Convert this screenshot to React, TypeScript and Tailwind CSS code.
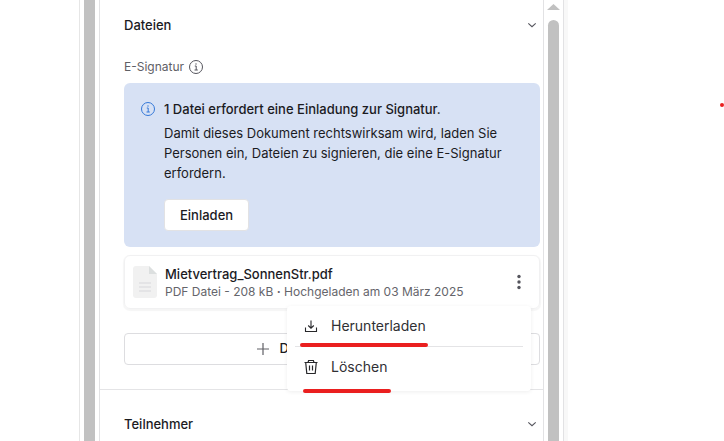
import type { ReactNode } from "react";

function InfoIcon({ className }: { className: string }) {
    return (
        <svg className={className} width="16" height="16" viewBox="0 0 16 16" fill="none" stroke="currentColor" aria-hidden="true">
            <circle cx="8" cy="8" r="6.5" />
            <path d="M6.8 7H8.2V11M6.5 11H9.8" />
            <circle cx="8" cy="5" r="0.7" fill="currentColor" stroke="none" />
        </svg>
    )
}

function ChevronIcon() {
    return (
        <svg width="16" height="16" viewBox="0 0 16 16" fill="none" aria-hidden="true">
            <path d="M4.3 6.3L8 9.7L11.7 6.3" stroke="#55555d" strokeWidth="1.1" />
        </svg>
    )
}

function FileIcon() {
    return (
        <svg className="shrink-0" width="24" height="32" viewBox="0 0 24 32" aria-hidden="true">
            <path d="M3 0H16L24 8V29Q24 32 21 32H3Q0 32 0 29V3Q0 0 3 0Z" fill="#f1f1f1" />
            <path d="M16 0L24 8H16Z" fill="#dcdfdf" />
            <path d="M6 17H18M6 21H18M6 25H18" stroke="#dfe0e2" strokeWidth="1.6" />
        </svg>
    )
}

function DownloadIcon() {
    return (
        <svg width="16" height="16" viewBox="0 0 16 16" fill="none" stroke="#27272a" strokeWidth="1.1" aria-hidden="true">
            <path d="M8 2.5V10M5.2 7.5L8 10.2L10.8 7.5M2.5 9.5V13.5H13.5V9.5" />
        </svg>
    )
}

function TrashIcon() {
    return (
        <svg width="16" height="16" viewBox="0 0 16 16" fill="none" stroke="#27272a" strokeWidth="1.2" aria-hidden="true">
            <path d="M1.5 3.5H14.5M5 3.5L5.6 1.5H10.4L11 3.5M2.7 3.5L3.8 14.5H12.2L13.3 3.5M6.5 6.5V11.5M9.5 6.5V11.5" />
        </svg>
    )
}

function SectionHeader({ title }: { title: string }) {
    return (
        <button type="button" className="flex w-full items-center justify-between text-[13px] leading-5 font-medium text-[#1b1b1f]">
            {title}
            <ChevronIcon />
        </button>
    )
}

function MenuItem({ icon, label }: { icon: ReactNode, label: string }) {
    return (
        <button type="button" role="menuitem" className="flex h-10 w-full items-center gap-3 px-2 text-sm text-[#303034]">
            {icon}
            {label}
        </button>
    )
}

function FileMenu() {
    return (
        <div role="menu" className="absolute top-[50px] right-2 z-10 w-[244px] rounded-sm bg-white px-2 pb-1 shadow-[0_1px_4px_rgba(0,0,0,0.07)]">
            <MenuItem icon={<DownloadIcon />} label="Herunterladen" />
            <div className="h-px bg-[#e4e4e6]"></div>
            <MenuItem icon={<TrashIcon />} label="Löschen" />
            <span className="absolute top-[37px] left-[13px] h-1 w-32 rounded-full bg-[#ea1f1f]"></span>
            <span className="absolute -bottom-0.5 left-4 h-1 w-[88px] rounded-full bg-[#ea1f1f]"></span>
        </div>
    )
}

function SignatureNotice() {
    return (
        <div className="flex gap-2 rounded-md bg-[#d7e1f4] p-4 text-[13px] leading-5 text-[#1b1b1f]">
            <InfoIcon className="mt-0.5 shrink-0 text-[#3478d8]" />
            <div>
                <p className="font-medium">1 Datei erfordert eine Einladung zur Signatur.</p>
                <p className="mt-1 max-w-[344px]">
                    Damit dieses Dokument rechtswirksam wird, laden Sie Personen ein, Dateien zu signieren, die eine E-Signatur erfordern.
                </p>
                <button type="button" className="mt-4 block h-8 rounded-sm border border-[#e2e2e4] bg-white px-[15px] font-medium">
                    Einladen
                </button>
            </div>
        </div>
    )
}

function FileCard() {
    return (
        <div className="relative mt-2 flex h-[54px] items-center rounded-md border border-[#f1f1f2] px-2 shadow-[0_1px_1px_1px_rgba(0,0,0,0.04)]">
            <FileIcon />
            <div className="ml-2 flex-1 pt-0.5 whitespace-nowrap">
                <p className="text-[13px] leading-[18px] font-medium text-[#1b1b1f]">Mietvertrag_SonnenStr.pdf</p>
                <p className="text-xs leading-[18px] text-[#65656b]">
                    PDF Datei - 208 kB <span className="font-bold">·</span> Hochgeladen am 03 März 2025
                </p>
            </div>
            <button type="button" aria-label="Optionen" className="mr-1">
                <svg width="16" height="16" viewBox="0 0 16 16" fill="#55555d" aria-hidden="true">
                    <circle cx="8" cy="2.5" r="1.7" />
                    <circle cx="8" cy="8" r="1.7" />
                    <circle cx="8" cy="13.5" r="1.7" />
                </svg>
            </button>
            <FileMenu />
        </div>
    )
}

export default function App() {
    return (
        <div className="relative flex h-screen overflow-hidden bg-white font-['Inter','Liberation_Sans',sans-serif]">
            <div className="w-20 shrink-0 border-r border-[#e6e6e6]"></div>
            <div className="flex w-5 shrink-0 border-r border-[#e2e2e4] pl-1">
                <div className="w-[11px] bg-[#c1c1c1]"></div>
            </div>

            <main className="min-w-0 flex-1">
                <section className="border-b border-[#e4e4e6] pr-[3px] pb-6 pl-6">
                    <div className="pt-[15px] pb-[17px]">
                        <SectionHeader title="Dateien" />
                    </div>
                    <div className="mb-0.5 flex h-[29px] items-center gap-1 text-xs text-[#606066]">
                        E-Signatur
                        <InfoIcon className="text-[#55555d]" />
                    </div>
                    <SignatureNotice />
                    <FileCard />
                    <button type="button" className="mt-6 flex h-8 w-full items-center justify-center gap-2 rounded-sm border border-[#dddde0] pr-2 text-[13px] font-medium text-[#1b1b1f]">
                        <svg width="16" height="16" viewBox="0 0 16 16" fill="none" stroke="#606066" strokeWidth="1.2" aria-hidden="true">
                            <path d="M8 2V14M2 8H14" />
                        </svg>
                        Dateien hinzufügen
                    </button>
                </section>
                <section className="py-6 pr-[3px] pl-6">
                    <SectionHeader title="Teilnehmer" />
                </section>
            </main>

            <div className="flex w-[21px] shrink-0 flex-col items-center gap-2.5 border-x border-[#e2e2e4] pt-1">
                <svg width="13" height="6" viewBox="0 0 13 6" aria-hidden="true">
                    <path d="M6.5 0L13 6H0Z" fill="#c1c1c1" />
                </svg>
                <div className="w-[11px] flex-1 rounded-t-full bg-[#c1c1c1]"></div>
            </div>
            <div className="w-40 shrink-0">
                <div className="h-full w-1 bg-[#f8f8f8]"></div>
            </div>
            <span className="absolute top-[103px] right-0 size-1 rounded-full bg-[#ea1f1f]"></span>
        </div>
    )
}
